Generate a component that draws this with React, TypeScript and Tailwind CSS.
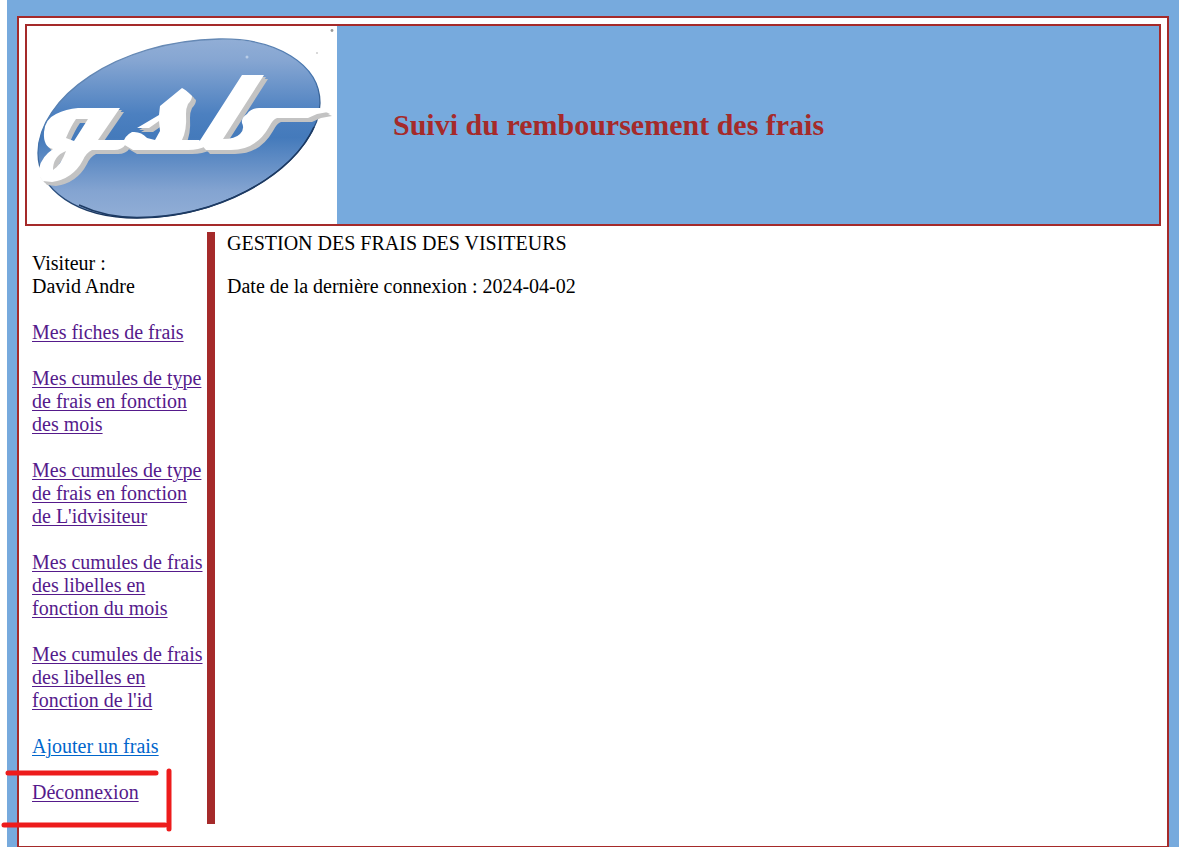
const links = [
  "Mes fiches de frais",
  "Mes cumules de type de frais en fonction des mois",
  "Mes cumules de type de frais en fonction de L'idvisiteur",
  "Mes cumules de frais des libelles en fonction du mois",
  "Mes cumules de frais des libelles en fonction de l'id",
];

function Logo() {
  return (
    <svg className="h-[198px] w-[310px] shrink-0 bg-white" viewBox="27 26 310 198" role="img" aria-label="gsb">
      <defs>
        <linearGradient id="oval" x1="0" y1="0" x2="0" y2="1">
          <stop offset="0" stopColor="#91aed6" />
          <stop offset="0.12" stopColor="#86a6d2" />
          <stop offset="0.42" stopColor="#4c80c0" />
          <stop offset="0.55" stopColor="#447abb" />
          <stop offset="0.85" stopColor="#84a4d1" />
          <stop offset="1" stopColor="#91aed6" />
        </linearGradient>
        <linearGradient id="rim" x1="0" y1="0" x2="0.4" y2="1">
          <stop offset="0" stopColor="#7c96b8" />
          <stop offset="0.5" stopColor="#4475af" />
          <stop offset="1" stopColor="#142c50" />
        </linearGradient>
        <g id="letters">
          <path fillRule="evenodd" d="M78 108 H120 L98 140 H126 V144 Q122 150 114 150 H92 Q86 153 83 160 Q73 179 52 182 L43 181 L38 175 Q39 161 48 153 L53 149 Q43 147 44 132 Q45 119 56 114 Q66 109 78 108 Z M76 119 Q71 126 66 138 L74 141 L88 119 Z M66 151 Q53 156 53 170 Q61 165 66 151 Z" />
          <path d="M160 106 L182 88 Q185 89 192 96 Q192 100 188 104 Q186 108 186 114 Q187 130 182 140 H199 L206 146 Q199 150 188 150 H133 L123 144 Q124 136 132 132 Q141 131 147 138 L155 140 L160 131 L159 121 L149 128 L137 128 L159 115 Z" />
          <path d="M242 75 H264 L223 139 Q235 139 240 134 Q245 129 242 123 Q241 118 247 114 Q251 108 259 108 H320 L328 112 L317 114 L308 118 H277 Q273 119 269 127 Q256 150 231 150 H206 L199 142 Z" />
        </g>
      </defs>
      <path d="M219 39 C276 38 320 64 320 103 C320 153 238 218 137 218 C77 218 38 190 38 153 C38 98 116 41 219 39Z" fill="url(#oval)" stroke="url(#rim)" strokeWidth="1.3" />
      <path d="M314 127 C291 176 220 217 137 217.500 C115 217.500 96 213 79 205" fill="none" stroke="#1c3a63" strokeWidth="1.6" />
      <use href="#letters" fill="#c3c3c3" transform="translate(4 4)" />
      <use href="#letters" fill="#c3c3c3" transform="translate(2 2)" />
      <use href="#letters" fill="#fff" />
      <circle cx="247" cy="57" r="1.5" fill="#b9cde7" />
      <circle cx="332" cy="30.5" r="1.4" fill="#999" />
      <circle cx="317" cy="53" r="1" fill="#ccc" />
    </svg>
  );
}

export default function App() {
  return (
    <div className="bg-white pl-[7px] font-['Liberation_Serif',serif] text-[20px] leading-[23px] text-black">
      <div className="min-h-screen bg-[#77aadd] pt-4 pr-2.5 pl-2.5">
        <div className="border-2 border-[brown] bg-white px-1.5 pt-1.5 pb-[22px]">
          <header className="flex items-center border-2 border-[brown] bg-[#77aadd]">
            <Logo />
            <h1 className="ml-14 text-[30px] leading-[34px] font-bold text-[brown]">Suivi du remboursement des frais</h1>
          </header>
          <div className="mt-1.5 flex">
            <nav aria-label="Menu" className="w-[190px] shrink-0 border-r-8 border-[brown] pt-5 pb-5 pl-[7px]">
              <p>Visiteur :<br />David Andre</p>
              <ul>
                {links.map((label) => (
                  <li key={label} className="mt-[23px]">
                    <a href="#" className="text-[#551a8b] underline decoration-1 underline-offset-2">{label}</a>
                  </li>
                ))}
                <li className="mt-[23px]">
                  <a href="#" className="text-[#0066cc] underline decoration-1 underline-offset-2">Ajouter un frais</a>
                </li>
                <li className="relative mt-[23px]">
                  <a href="#" className="text-[#551a8b] underline decoration-1 underline-offset-2">Déconnexion</a>
                  <svg className="pointer-events-none absolute -top-3 -left-8 h-16 w-44" viewBox="0 769 176 64" fill="none" stroke="#ed1c1c" strokeWidth="5" strokeLinecap="round" overflow="visible" aria-hidden="true">
                    <path d="M8 773H156M4 825H165M169 771V829" />
                  </svg>
                </li>
              </ul>
            </nav>
            <main className="pl-3">
              <h2>GESTION DES FRAIS DES VISITEURS</h2>
              <p className="mt-5">Date de la dernière connexion : 2024-04-02</p>
            </main>
          </div>
        </div>
      </div>
    </div>
  );
}
